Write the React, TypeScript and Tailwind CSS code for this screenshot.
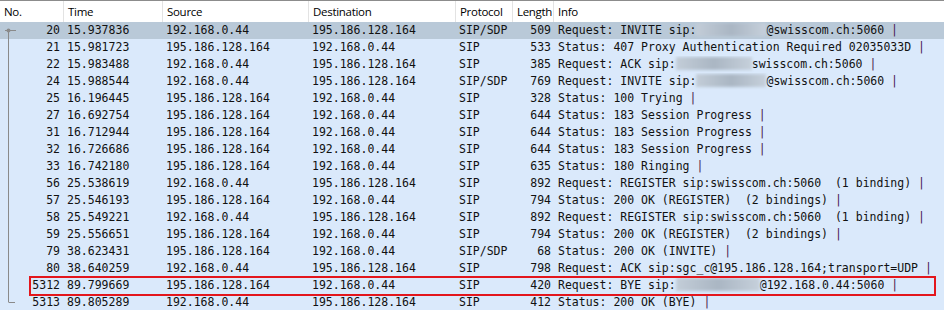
import React from 'react';

type Row = {
  no: string;
  time: string;
  src: string;
  dst: string;
  proto: string;
  len: string;
  info: React.ReactNode;
};

const Blur = ({ w }: { w: number }) => (
  <span
    className="inline-block h-[13px] align-[-2px] bg-gradient-to-r from-[#c3cdd8] via-[#aab6c3] to-[#c6d0db] blur-[1.5px]"
    style={{ width: w }}
  />
);

const Pipe = () => <span className="text-[#4a1a4f]">|</span>;

const rows: Row[] = [
  { no: '20', time: '15.937836', src: '192.168.0.44', dst: '195.186.128.164', proto: 'SIP/SDP', len: '509', info: <>Request: INVITE sip:<Blur w={70} />@swisscom.ch:5060 <Pipe /></> },
  { no: '21', time: '15.981723', src: '195.186.128.164', dst: '192.168.0.44', proto: 'SIP', len: '533', info: <>Status: 407 Proxy Authentication Required 02035033D <Pipe /></> },
  { no: '22', time: '15.983488', src: '192.168.0.44', dst: '195.186.128.164', proto: 'SIP', len: '385', info: <>Request: ACK sip:<Blur w={76} />swisscom.ch:5060 <Pipe /></> },
  { no: '24', time: '15.988544', src: '192.168.0.44', dst: '195.186.128.164', proto: 'SIP/SDP', len: '769', info: <>Request: INVITE sip:<Blur w={70} />@swisscom.ch:5060 <Pipe /></> },
  { no: '25', time: '16.196445', src: '195.186.128.164', dst: '192.168.0.44', proto: 'SIP', len: '328', info: <>Status: 100 Trying <Pipe /></> },
  { no: '27', time: '16.692754', src: '195.186.128.164', dst: '192.168.0.44', proto: 'SIP', len: '644', info: <>Status: 183 Session Progress <Pipe /></> },
  { no: '31', time: '16.712944', src: '195.186.128.164', dst: '192.168.0.44', proto: 'SIP', len: '644', info: <>Status: 183 Session Progress <Pipe /></> },
  { no: '32', time: '16.726686', src: '195.186.128.164', dst: '192.168.0.44', proto: 'SIP', len: '644', info: <>Status: 183 Session Progress <Pipe /></> },
  { no: '33', time: '16.742180', src: '195.186.128.164', dst: '192.168.0.44', proto: 'SIP', len: '635', info: <>Status: 180 Ringing <Pipe /></> },
  { no: '56', time: '25.538619', src: '192.168.0.44', dst: '195.186.128.164', proto: 'SIP', len: '892', info: <>Request: REGISTER sip:swisscom.ch:5060  (1 binding) <Pipe /></> },
  { no: '57', time: '25.546193', src: '195.186.128.164', dst: '192.168.0.44', proto: 'SIP', len: '794', info: <>Status: 200 OK (REGISTER)  (2 bindings) <Pipe /></> },
  { no: '58', time: '25.549221', src: '192.168.0.44', dst: '195.186.128.164', proto: 'SIP', len: '892', info: <>Request: REGISTER sip:swisscom.ch:5060  (1 binding) <Pipe /></> },
  { no: '59', time: '25.556651', src: '195.186.128.164', dst: '192.168.0.44', proto: 'SIP', len: '794', info: <>Status: 200 OK (REGISTER)  (2 bindings) <Pipe /></> },
  { no: '79', time: '38.623431', src: '195.186.128.164', dst: '192.168.0.44', proto: 'SIP/SDP', len: '68', info: <>Status: 200 OK (INVITE) <Pipe /></> },
  { no: '80', time: '38.640259', src: '192.168.0.44', dst: '195.186.128.164', proto: 'SIP', len: '798', info: <>Request: ACK sip:sgc_c@195.186.128.164;transport=UDP <Pipe /></> },
  { no: '5312', time: '89.799669', src: '195.186.128.164', dst: '192.168.0.44', proto: 'SIP', len: '420', info: <>Request: BYE sip:<Blur w={84} />@192.168.0.44:5060 <Pipe /></> },
  { no: '5313', time: '89.805289', src: '192.168.0.44', dst: '195.186.128.164', proto: 'SIP', len: '412', info: <>Status: 200 OK (BYE) <Pipe /></> },
];

const cols = 'grid grid-cols-[63px_99px_146px_147px_57px_41px_1fr]';
const headers = ['No.', 'Time', 'Source', 'Destination', 'Protocol', 'Length', 'Info'];

export default function App() {
  return (
    <div className="w-[944px] h-[310px] overflow-hidden bg-white border-t border-[#8c8c8c]">
      {/* header */}
      <div className={`${cols} h-[21px] bg-white text-[11.5px] text-black font-['Open_Sans',sans-serif]`}>
        {headers.map((h, i) => (
          <div
            key={h}
            className={`flex items-center pl-[4px] leading-none tracking-[-0.3px] ${i > 0 ? 'border-l border-[#e3e3e3]' : ''}`}
          >
            {h}
          </div>
        ))}
      </div>

      {/* packet list */}
      <div className="relative font-['DejaVu_Sans_Mono',monospace] text-[11.5px] text-[#111]">
        {rows.map((r, i) => (
          <div
            key={r.no}
            className={`${cols} h-[17px] leading-[17px] whitespace-pre ${i === 0 ? 'bg-[#b9c9d8]' : 'bg-[#dae9fb]'}`}
          >
            <div className="text-right pr-[3px]">{r.no}</div>
            <div className="pl-[4px]">{r.time}</div>
            <div className="pl-[4px]">{r.src}</div>
            <div className="pl-[4px]">{r.dst}</div>
            <div className="pl-[4px]">{r.proto}</div>
            <div className="text-right pr-[2px]">{r.len}</div>
            <div className="pl-[5px] overflow-hidden">{r.info}</div>
          </div>
        ))}

        {/* conversation tree line */}
        <svg className="absolute left-0 top-0" width="20" height="290">
          <line x1="8.5" y1="8" x2="8.5" y2="280" stroke="#8a8a8a" strokeWidth="1" />
          <line x1="5" y1="8.5" x2="16" y2="8.5" stroke="#8a8a8a" strokeWidth="1" />
          <circle cx="8.5" cy="8.5" r="2" fill="#8a8a8a" />
          <line x1="8.5" y1="280.5" x2="15" y2="280.5" stroke="#8a8a8a" strokeWidth="1" />
        </svg>

        {/* highlight box */}
        <div className="absolute left-[29px] top-[254px] w-[907px] h-[20px] border-2 border-[#e3161c] pointer-events-none" />
      </div>
    </div>
  );
}
